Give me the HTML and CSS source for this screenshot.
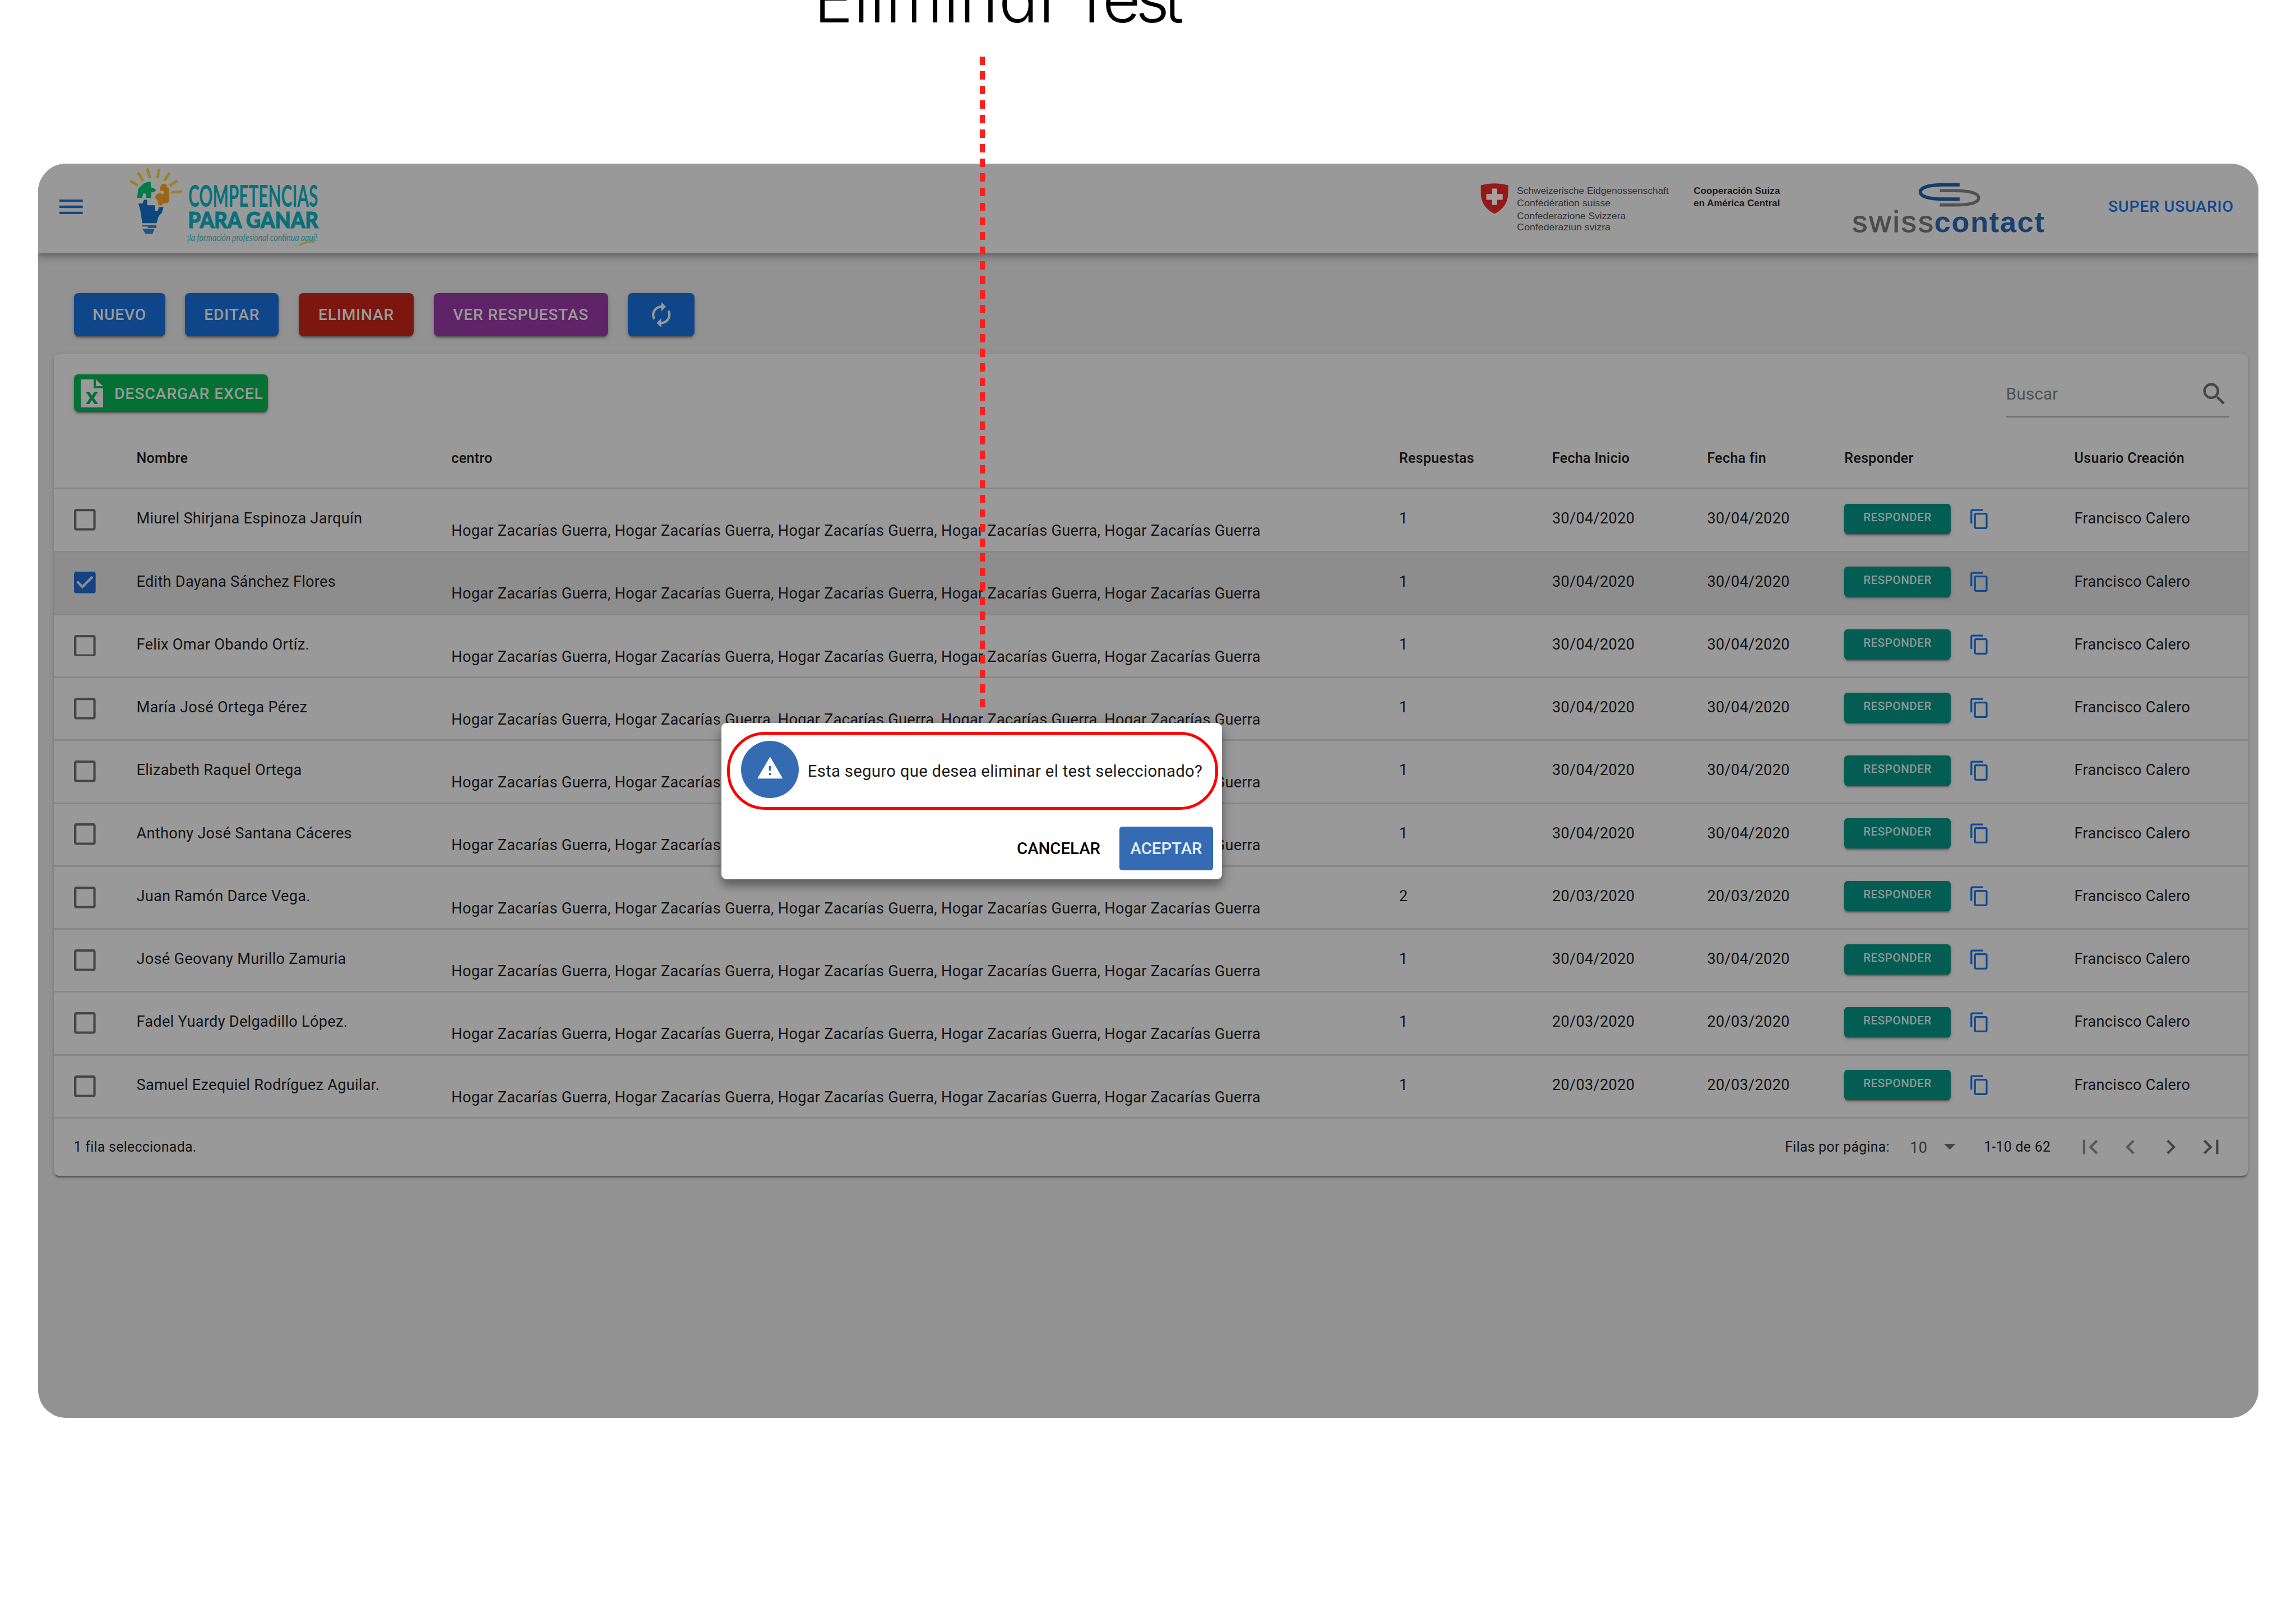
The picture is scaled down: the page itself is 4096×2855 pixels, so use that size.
FILE: index.html
```html
<!DOCTYPE html>
<html lang="es">
<head>
<meta charset="utf-8">
<title>Eliminar Test</title>
<link rel="stylesheet" href="styles.css">
</head>
<body>
<svg class="defs" aria-hidden="true">
  <symbol id="i-box" viewBox="3 3 18 18"><path d="M19 5v14H5V5h14m0-2H5c-1.1 0-2 .9-2 2v14c0 1.1.9 2 2 2h14c1.1 0 2-.9 2-2V5c0-1.1-.9-2-2-2z"/></symbol>
  <symbol id="i-check" viewBox="3 3 18 18"><path d="M19 3H5c-1.11 0-2 .9-2 2v14c0 1.1.89 2 2 2h14c1.11 0 2-.9 2-2V5c0-1.1-.89-2-2-2zm-9 14l-5-5 1.41-1.41L10 14.17l7.59-7.59L19 8l-9 9z"/></symbol>
  <symbol id="i-copy" viewBox="0 0 24 24"><path d="M16 1H4c-1.1 0-2 .9-2 2v14h2V3h12V1zm3 4H8c-1.1 0-2 .9-2 2v14c0 1.1.9 2 2 2h11c1.1 0 2-.9 2-2V7c0-1.1-.9-2-2-2zm0 16H8V7h11v14z"/></symbol>
</svg>
<div class="stage">
  <div class="caption"><span class="word-a">Eliminar</span><span class="word-b">Test</span></div>

  <div class="app">
    <header class="appbar">
      <svg class="menu" viewBox="3 6 18 12" preserveAspectRatio="none"><path d="M3 18h18v-2H3v2zm0-5h18v-2H3v2zm0-7v2h18V6H3z"/></svg>
      <svg class="brand" viewBox="360 480 600 262.6">
        <g transform="translate(360 481) scale(.33333)">
          <g stroke="#988428" stroke-width="24" fill="none">
            <path d="M64 146L134 190M132 74L178 148M214 38L238 122M320 42L304 124M410 78L364 148M482 146L412 192M428 250L518 240"/>
          </g>
          <path fill="#037a4c" d="M125 298L137 215L185 170L215 158H246V205L288 220V240L250 250V298H205V262L182 258L170 298Z"/>
          <path fill="#9b6617" d="M345 175H378L392 205L408 220V330L385 347H348V362H312V335L297 310L283 292L298 268L325 252L345 265L360 262V240L328 235V205Z"/>
          <g fill="#0a487c">
            <path d="M138 348H172L187 315H215V362H280L284 410H308L318 378H358L345 425L315 460L297 520H172L155 410Z"/>
            <path d="M172 538H282V550H172ZM220 550L296 536V562L220 562ZM172 568H280L262 612H198Z" opacity=".85"/>
          </g>
        </g>
        <g fill="#08707a" font-family="Lato, sans-serif">
          <text x="552" y="607" font-size="89" font-weight="700" textLength="380" lengthAdjust="spacingAndGlyphs">COMPETENCIAS</text>
          <text x="551" y="669" font-size="66" font-weight="900" stroke="#08707a" stroke-width="2" textLength="382" lengthAdjust="spacingAndGlyphs">PARA GANAR</text>
          <text x="549" y="706" font-size="29" font-weight="400" font-style="italic" textLength="380" lengthAdjust="spacingAndGlyphs" opacity=".8">¡la formación profesional continua aquí!</text>
        </g>
        <path d="M878 719Q892 708 922 709" fill="none" stroke="#94883a" stroke-width="6"/>
      </svg>
      <svg class="cooperation" viewBox="4320 480 920 262.6">
        <path fill="#951917" d="M4336 543Q4376 533 4416 543V566Q4416 606 4376 627Q4336 606 4336 566Z"/>
        <path fill="#a8a09f" d="M4369 553h15v16h16v17h-16v15h-15v-15h-17v-17h17z"/>
        <g font-family="Liberation Sans, Arial, sans-serif" font-size="28" fill="#333">
          <text x="4442" y="568" textLength="444" lengthAdjust="spacingAndGlyphs">Schweizerische Eidgenossenschaft</text>
          <text x="4442" y="605" textLength="274" lengthAdjust="spacingAndGlyphs">Confédération suisse</text>
          <text x="4442" y="642" textLength="318" lengthAdjust="spacingAndGlyphs">Confederazione Svizzera</text>
          <text x="4442" y="675" textLength="274" lengthAdjust="spacingAndGlyphs">Confederaziun svizra</text>
          <g font-weight="700" fill="#1c1c1c">
            <text x="4959" y="568" textLength="253" lengthAdjust="spacingAndGlyphs">Cooperación Suiza</text>
            <text x="4959" y="605" textLength="253" lengthAdjust="spacingAndGlyphs">en América Central</text>
          </g>
        </g>
      </svg>
      <svg class="contact" viewBox="5400 480 610 262.6">
        <g fill="none" stroke-width="9">
          <path stroke="#515151" d="M5680 559H5726C5768 559 5794 567 5794 580C5794 594 5768 601 5726 601H5680"/>
          <path stroke="#153c6b" stroke-width="10" d="M5738 542H5692C5648 542 5623 550 5623 563C5623 577 5648 584 5692 584H5738"/>
        </g>
        <g font-family="Liberation Sans, Arial, sans-serif">
          <text x="5424" y="681" font-size="88" fill="#4c4c4c" stroke="#4c4c4c" stroke-width="2" textLength="237" lengthAdjust="spacing">swiss</text>
          <text x="5664" y="681" font-size="86" font-weight="700" fill="#1b4070" textLength="322" lengthAdjust="spacing">contact</text>
        </g>
      </svg>
      <span class="user">SUPER USUARIO</span>
    </header>

    <div class="actions">
      <button class="btn blue">NUEVO</button>
      <button class="btn blue edit">EDITAR</button>
      <button class="btn red">ELIMINAR</button>
      <button class="btn purple">VER RESPUESTAS</button>
      <button class="btn blue sync"><svg viewBox="0 0 24 24"><path d="M12 6v3l4-4-4-4v3c-4.42 0-8 3.58-8 8 0 1.57.46 3.03 1.24 4.26L6.7 14.8c-.45-.83-.7-1.79-.7-2.8 0-3.31 2.69-6 6-6zm6.76 1.74L17.3 9.2c.44.84.7 1.79.7 2.8 0 3.31-2.69 6-6 6v-3l-4 4 4 4v-3c4.42 0 8-3.58 8-8 0-1.57-.46-3.03-1.24-4.26z"/></svg></button>
    </div>

    <section class="card">
      <div class="tools">
        <button class="excel"><svg viewBox="0 0 40 50"><path fill-rule="evenodd" d="M0 0H23V16H40V50H0ZM9 22L16.500 33L9 44H15.500L20 37L24.500 44H31L23.500 33L31 22H24.500L20 29L15.500 22Z"/><path d="M27 0L40 12H27Z"/></svg><span>DESCARGAR EXCEL</span></button>
        <div class="search"><span>Buscar</span><svg viewBox="0 0 24 24"><path d="M15.500 14h-.79l-.28-.27C15.410 12.590 16 11.110 16 9.500 16 5.910 13.090 3 9.500 3S3 5.910 3 9.500 5.910 16 9.500 16c1.610 0 3.090-.59 4.230-1.570l.27.28v.79l5 4.990L20.490 19l-4.990-5zm-6 0C7.010 14 5 11.990 5 9.500S7.010 5 9.500 5 14 7.010 14 9.500 11.990 14 9.500 14z"/></svg></div>
      </div>

      <div class="row head"><span></span><span>Nombre</span><span>centro</span><span>Respuestas</span><span>Fecha Inicio</span><span>Fecha fin</span><span>Responder</span><span>Usuario Creación</span></div>
      <div class="row"><svg class="cb"><use href="#i-box"/></svg><span>Miurel Shirjana Espinoza Jarquín</span><span class="centro">Hogar Zacarías Guerra, Hogar Zacarías Guerra, Hogar Zacarías Guerra, Hogar Zacarías Guerra, Hogar Zacarías Guerra</span><span>1</span><span>30/04/2020</span><span>30/04/2020</span><div class="answer"><button>RESPONDER</button><svg><use href="#i-copy"/></svg></div><span>Francisco Calero</span></div>
      <div class="row selected"><svg class="cb"><use href="#i-check"/></svg><span>Edith Dayana Sánchez Flores</span><span class="centro">Hogar Zacarías Guerra, Hogar Zacarías Guerra, Hogar Zacarías Guerra, Hogar Zacarías Guerra, Hogar Zacarías Guerra</span><span>1</span><span>30/04/2020</span><span>30/04/2020</span><div class="answer"><button>RESPONDER</button><svg><use href="#i-copy"/></svg></div><span>Francisco Calero</span></div>
      <div class="row"><svg class="cb"><use href="#i-box"/></svg><span>Felix Omar Obando Ortíz.</span><span class="centro">Hogar Zacarías Guerra, Hogar Zacarías Guerra, Hogar Zacarías Guerra, Hogar Zacarías Guerra, Hogar Zacarías Guerra</span><span>1</span><span>30/04/2020</span><span>30/04/2020</span><div class="answer"><button>RESPONDER</button><svg><use href="#i-copy"/></svg></div><span>Francisco Calero</span></div>
      <div class="row"><svg class="cb"><use href="#i-box"/></svg><span>María José Ortega Pérez</span><span class="centro">Hogar Zacarías Guerra, Hogar Zacarías Guerra, Hogar Zacarías Guerra, Hogar Zacarías Guerra, Hogar Zacarías Guerra</span><span>1</span><span>30/04/2020</span><span>30/04/2020</span><div class="answer"><button>RESPONDER</button><svg><use href="#i-copy"/></svg></div><span>Francisco Calero</span></div>
      <div class="row"><svg class="cb"><use href="#i-box"/></svg><span>Elizabeth Raquel Ortega</span><span class="centro">Hogar Zacarías Guerra, Hogar Zacarías Guerra, Hogar Zacarías Guerra, Hogar Zacarías Guerra, Hogar Zacarías Guerra</span><span>1</span><span>30/04/2020</span><span>30/04/2020</span><div class="answer"><button>RESPONDER</button><svg><use href="#i-copy"/></svg></div><span>Francisco Calero</span></div>
      <div class="row"><svg class="cb"><use href="#i-box"/></svg><span>Anthony José Santana Cáceres</span><span class="centro">Hogar Zacarías Guerra, Hogar Zacarías Guerra, Hogar Zacarías Guerra, Hogar Zacarías Guerra, Hogar Zacarías Guerra</span><span>1</span><span>30/04/2020</span><span>30/04/2020</span><div class="answer"><button>RESPONDER</button><svg><use href="#i-copy"/></svg></div><span>Francisco Calero</span></div>
      <div class="row"><svg class="cb"><use href="#i-box"/></svg><span>Juan Ramón Darce Vega.</span><span class="centro">Hogar Zacarías Guerra, Hogar Zacarías Guerra, Hogar Zacarías Guerra, Hogar Zacarías Guerra, Hogar Zacarías Guerra</span><span>2</span><span>20/03/2020</span><span>20/03/2020</span><div class="answer"><button>RESPONDER</button><svg><use href="#i-copy"/></svg></div><span>Francisco Calero</span></div>
      <div class="row"><svg class="cb"><use href="#i-box"/></svg><span>José Geovany Murillo Zamuria</span><span class="centro">Hogar Zacarías Guerra, Hogar Zacarías Guerra, Hogar Zacarías Guerra, Hogar Zacarías Guerra, Hogar Zacarías Guerra</span><span>1</span><span>30/04/2020</span><span>30/04/2020</span><div class="answer"><button>RESPONDER</button><svg><use href="#i-copy"/></svg></div><span>Francisco Calero</span></div>
      <div class="row"><svg class="cb"><use href="#i-box"/></svg><span>Fadel Yuardy Delgadillo López.</span><span class="centro">Hogar Zacarías Guerra, Hogar Zacarías Guerra, Hogar Zacarías Guerra, Hogar Zacarías Guerra, Hogar Zacarías Guerra</span><span>1</span><span>20/03/2020</span><span>20/03/2020</span><div class="answer"><button>RESPONDER</button><svg><use href="#i-copy"/></svg></div><span>Francisco Calero</span></div>
      <div class="row"><svg class="cb"><use href="#i-box"/></svg><span>Samuel Ezequiel Rodríguez Aguilar.</span><span class="centro">Hogar Zacarías Guerra, Hogar Zacarías Guerra, Hogar Zacarías Guerra, Hogar Zacarías Guerra, Hogar Zacarías Guerra</span><span>1</span><span>20/03/2020</span><span>20/03/2020</span><div class="answer"><button>RESPONDER</button><svg><use href="#i-copy"/></svg></div><span>Francisco Calero</span></div>

      <footer class="pager">
        <span class="count">1 fila seleccionada.</span>
        <span class="per">Filas por página:</span>
        <span class="size">10</span>
        <svg class="caret" viewBox="7 10 10 5"><path d="M7 10l5 5 5-5z"/></svg>
        <span class="range">1-10 de 62</span>
        <nav>
          <svg viewBox="0 0 24 24" class="off"><path d="M18.410 16.590L13.820 12l4.590-4.590L17 6l-6 6 6 6zM6 6h2v12H6z"/></svg>
          <svg viewBox="0 0 24 24" class="off"><path d="M15.410 7.410L14 6l-6 6 6 6 1.410-1.410L10.830 12z"/></svg>
          <svg viewBox="0 0 24 24"><path d="M10 6L8.590 7.410 13.170 12l-4.580 4.590L10 18l6-6z"/></svg>
          <svg viewBox="0 0 24 24"><path d="M5.590 7.410L10.180 12l-4.590 4.590L7 18l6-6-6-6zM16 6h2v12h-2z"/></svg>
        </nav>
      </footer>
    </section>
  </div>

  <div class="pointer"></div>

  <div class="dialog">
    <div class="message">
      <span class="badge"><svg viewBox="0 0 24 24"><path d="M1 21h22L12 2 1 21zm12-3h-2v-2h2v2zm0-4h-2v-4h2v4z"/></svg></span>
      <span>Esta seguro que desea eliminar el test seleccionado?</span>
    </div>
    <div class="choices">
      <button class="cancel">CANCELAR</button>
      <button class="accept">ACEPTAR</button>
    </div>
  </div>
</div>
</body>
</html>
```
FILE: styles.css
```css
* { box-sizing: border-box; }
html, body { margin: 0; background: #fff; }
body { font-family: Roboto, "Liberation Sans", sans-serif; color: #141414; }
button { font: inherit; border: 0; padding: 0; margin: 0; color: inherit; background: none; }
svg { display: block; flex: none; }
.defs { position: absolute; width: 0; height: 0; }

.stage { position: relative; width: 4096px; height: 2855px; overflow: hidden; }

.caption {
  display: flex;
  height: 292.4px;
  padding-left: 1452px;
  font: 300 117px/117px Inter, sans-serif;
  font-feature-settings: "cv11";
  color: #000;
  white-space: nowrap;
}
.caption span { margin-top: -61px; }
.word-a { letter-spacing: 1.2px; }
.word-b { margin-left: 14px; letter-spacing: -9px; }

.app {
  margin-left: 67.6px;
  width: 3961px;
  height: 2237.6px;
  border-radius: 50px;
  overflow: hidden;
  background: #929292;
}

.appbar {
  position: relative;
  display: flex;
  align-items: center;
  height: 160px;
  padding: 0 44px 0 38.4px;
  background: #999;
  box-shadow: 0 4px 8px rgba(0,0,0,.22), 0 8px 14px rgba(0,0,0,.14);
}
.menu { width: 41.7px; height: 26px; margin: 0 71.6px 6px 0; fill: #10478a; }
.brand { width: 365.5px; height: 160px; }
.cooperation { width: 560.5px; height: 160px; margin-left: auto; }
.contact { width: 371.6px; height: 160px; margin: 0 99.2px 0 97.5px; }
.user {
  width: 223.500px;
  padding-bottom: 7px;
  font-size: 28.4px;
  font-weight: 500;
  letter-spacing: .02857em;
  color: #10488c;
  white-space: nowrap;
}

.actions { display: flex; gap: 35.6px; padding: 70.7px 0 32.6px 64px; }
.btn {
  width: 163.2px;
  height: 76.7px;
  border-radius: 8px;
  font-size: 28.2px;
  font-weight: 500;
  letter-spacing: .02857em;
  color: #999;
  box-shadow: 0 5px 2px -3px rgba(0,0,0,.25), 0 3px 4px rgba(0,0,0,.16), 0 2px 10px rgba(0,0,0,.12);
}
.blue { background: #0f4689; }
.edit { width: 167px; }
.red { width: 205.2px; background: #7b170f; }
.purple { width: 310.8px; background: #5f2367; }
.sync { width: 119px; display: flex; align-items: center; justify-content: center; }
.sync svg { width: 49.500px; height: 49.500px; fill: #999; }

.card {
  margin: 0 19px 0 28.3px;
  height: 1466px;
  border-radius: 9px;
  background: #999;
  box-shadow: 0 5px 2px -2px rgba(0,0,0,.26), 0 3px 4px rgba(0,0,0,.14), 0 1px 8px rgba(0,0,0,.1);
}
.tools { display: flex; justify-content: space-between; height: 146px; padding: 35.8px 32.4px 0 35.7px; }
.excel {
  display: flex;
  align-items: center;
  width: 346.7px;
  height: 66.9px;
  padding: 1.500px 0 0 12.4px;
  border-radius: 8px;
  background: #047033;
  color: #999;
  font-size: 28.4px;
  font-weight: 500;
  letter-spacing: .02857em;
  white-space: nowrap;
  box-shadow: 0 5px 2px -3px rgba(0,0,0,.25), 0 3px 4px rgba(0,0,0,.16), 0 2px 10px rgba(0,0,0,.12);
}
.excel svg { width: 40px; height: 50px; margin-right: 20px; fill: #999; }
.search {
  display: flex;
  justify-content: space-between;
  width: 398.4px;
  height: 77px;
  padding: 8.800px 0 0;
  border-bottom: 3px solid #737373;
  color: #505050;
  font-size: 29.4px;
  line-height: 34px;
  letter-spacing: .01em;
}
.search span { padding-top: 9.500px; }
.search svg { width: 52.5px; height: 52.5px; margin-right: 1px; fill: #454545; }

.row {
  display: grid;
  grid-template-columns: 111.1px 561.8px 1690.7px 273px 276.5px 244.9px 410.2px 1fr;
  align-items: start;
  height: 112.27px;
  padding: 34.8px 0 0 36.500px;
  border-bottom: 3px solid #868786;
  font-size: 27.13px;
  line-height: 32px;
  letter-spacing: .01071em;
  white-space: nowrap;
}
.row > span { margin-top: 1.200px; }
.head { height: 95px; padding-top: 23px; font-size: 25.1px; font-weight: 500; line-height: 30px; color: #101010; }
.selected { background: #8d8d8d; }
.cb { width: 38.800px; height: 38.800px; fill: #464646; }
.selected .cb { fill: #164183; }
.row > .centro { margin-top: 23px; }
.answer { display: flex; margin-top: -9.4px; }
.answer button {
  width: 189.4px;
  height: 54px;
  padding-bottom: 6px;
  border-radius: 6px;
  background: #045d53;
  color: #8a9a97;
  font-size: 20.5px;
  font-weight: 500;
  line-height: 24px;
  letter-spacing: .02857em;
  box-shadow: 0 5px 2px -3px rgba(0,0,0,.25), 0 3px 4px rgba(0,0,0,.14), 0 2px 10px rgba(0,0,0,.1);
}
.answer svg { width: 38.500px; height: 38.500px; margin: 8px 0 0 32px; fill: #104a8e; }

.pager {
  display: flex;
  align-items: center;
  height: 102.3px;
  padding: 0 39.500px 1px 35.7px;
  font-size: 24.9px;
  letter-spacing: .01071em;
  white-space: nowrap;
}
.per { margin-left: auto; width: 223px; }
.size { width: 60.500px; font-size: 27.1px; color: #333; padding-top: 3px; }
.caret { width: 20.800px; height: 10.400px; margin-right: 50.500px; fill: #464646; }
.range { width: 164px; }
.pager nav { display: flex; gap: 20.6px; }
.pager nav svg { width: 51.3px; height: 51.3px; fill: #454545; }
.pager nav .off { fill: #595959; }

.pointer {
  position: absolute;
  left: 1747.7px;
  top: 101.1px;
  width: 9px;
  height: 1160.900px;
  background: repeating-linear-gradient(#ff1e1e 0 14.8px, transparent 14.8px 26.052px);
}

.dialog {
  position: absolute;
  left: 1287px;
  top: 1289.8px;
  width: 893px;
  height: 279px;
  padding: 16.200px 7.400px 0 9.800px;
  border-radius: 9px;
  background: #fff;
  box-shadow: 0 12px 16px rgba(0,0,0,.3), 0 4px 26px rgba(0,0,0,.16);
}
.message {
  display: flex;
  align-items: center;
  height: 139.3px;
  padding: 0 0 5px 20.500px;
  border: 5.800px solid red;
  border-radius: 68px;
  font-size: 29.35px;
  letter-spacing: .00938em;
  color: #1c1c1c;
  white-space: nowrap;
}
.message > span:last-child { padding-top: 6px; }
.badge {
  display: flex;
  align-items: center;
  justify-content: center;
  width: 102.5px;
  height: 102.5px;
  margin-right: 16px;
  border-radius: 50%;
  background: #346bb3;
}
.badge svg { width: 49.500px; height: 49.500px; margin-top: -4px; fill: #fff; }
.choices {
  display: flex;
  justify-content: flex-end;
  margin: 30.200px 8.600px 0 0;
  font-size: 29.3px;
  font-weight: 500;
  letter-spacing: .02857em;
}
.cancel { color: #000; margin-right: 34px; }
.accept { width: 167px; height: 77.4px; border-radius: 5px; background: #346bb3; color: #e4f0ff; }
```
